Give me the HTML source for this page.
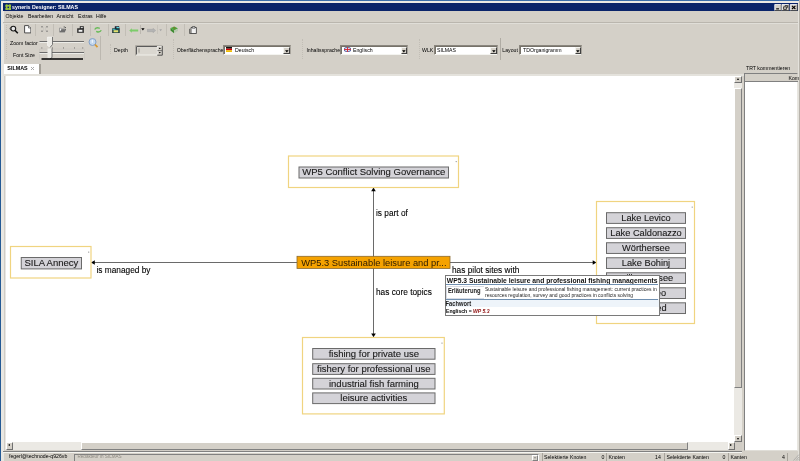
<!DOCTYPE html>
<html><head><meta charset="utf-8">
<style>
*{margin:0;padding:0;box-sizing:border-box}
html,body{width:800px;height:461px;overflow:hidden;background:#d4d0c8;font-family:"Liberation Sans",sans-serif;}
.a{position:absolute}
body{will-change:transform}
.t{position:absolute;white-space:nowrap;font-size:5.2px;color:#000;line-height:6px;transform:scaleY(1.15);transform-origin:0 50%}
.lbl{position:absolute;background:#d4d3d8;border:1px solid #6f6f6f;border-radius:1px;text-align:center;color:#222;font-size:9.3px;line-height:10px;white-space:nowrap;overflow:hidden}
.ybox{position:absolute;border:1px solid #f0d888;background:#fff}
.sep{position:absolute;width:1px;background:#a8a49c;border-right:1px solid #fff}
.grip{position:absolute;width:1px;border-left:1px dotted #c2beb6}
.combo{position:absolute;background:#fff;border:1px solid #8a867e;border-right-color:#a8a49c;border-bottom-color:#f4f4f0;box-shadow:inset 1px 1px 0 #767269}
.dd{position:absolute;right:0px;top:0.5px;bottom:0px;width:6.5px;background:#d4d0c8;border:1px solid;border-color:#f4f4f0 #404040 #404040 #f4f4f0}

</style></head><body>
<!-- window frame -->
<div class="a" style="left:0;top:0;width:800px;height:461px;background:#d4d0c8"></div>
<div class="a" style="left:0;top:0;width:1.2px;height:461px;background:#255a95"></div>
<div class="a" style="left:0;top:0;width:800px;height:1px;background:#3c6eaa"></div>
<div class="a" style="left:2px;top:1px;width:797px;height:2px;background:#ebe9e4"></div>
<div class="a" style="left:1.2px;top:1px;width:2.8px;height:460px;background:#e9e7e2"></div>
<!-- title bar -->
<div class="a" style="left:3px;top:3px;width:795px;height:8px;background:#0a246a"></div>
<svg class="a" style="left:4.5px;top:3.5px" width="6.5" height="6.5" viewBox="0 0 6.5 6.5"><g fill="#98c43a"><circle cx="1.7" cy="1.7" r="1.5"/><circle cx="4.8" cy="1.7" r="1.5"/><circle cx="1.7" cy="4.8" r="1.5"/><circle cx="4.8" cy="4.8" r="1.5"/><rect x="1" y="1" width="4.5" height="4.5"/></g><rect x="2.5" y="2.6" width="1.5" height="1.5" fill="#0a1a8a"/></svg>
<div class="t" style="left:12px;top:4px;color:#fff;font-weight:bold;font-size:5.3px;line-height:6px">syneris Designer: SILMAS</div>
<svg class="a" style="left:774px;top:3.5px" width="24" height="7" viewBox="0 0 24 7">
<rect x="0.75" y="0.5" width="6.5" height="6" fill="#d4d0c8"/><path d="M0.75 6.5 V0.5 H7.25" fill="none" stroke="#fff" stroke-width="0.8"/><path d="M0.75 6.5 H7.25 V0.5" fill="none" stroke="#404040" stroke-width="0.8"/>
<rect x="2.2" y="4.3" width="2.8" height="1.1" fill="#000"/>
<rect x="8" y="0.5" width="7" height="6" fill="#d4d0c8"/><path d="M8 6.5 V0.5 H15" fill="none" stroke="#fff" stroke-width="0.8"/><path d="M8 6.5 H15 V0.5" fill="none" stroke="#404040" stroke-width="0.8"/>
<path d="M10.8 1.6 H13.6 V3.8 M9.6 2.8 H12.4 V5.4 H9.6 Z" fill="none" stroke="#000" stroke-width="0.7"/>
<rect x="16.3" y="0.5" width="7" height="6" fill="#d4d0c8"/><path d="M16.3 6.5 V0.5 H23.3" fill="none" stroke="#fff" stroke-width="0.8"/><path d="M16.3 6.5 H23.3 V0.5" fill="none" stroke="#404040" stroke-width="0.8"/>
<path d="M18 1.8 L21.4 5 M21.4 1.8 L18 5" stroke="#000" stroke-width="1.1"/>
</svg>
<div class="a" style="left:799px;top:0;width:1px;height:461px;background:#b8b4ac"></div>
<div class="a" style="left:798px;top:3px;width:1px;height:458px;background:#e4e2dc"></div>
<!-- menu bar -->
<div class="t" style="left:5.5px;top:13px">Objekte</div>
<div class="t" style="left:28px;top:13px">Bearbeiten</div>
<div class="t" style="left:56.5px;top:13px">Ansicht</div>
<div class="t" style="left:78px;top:13px">Extras</div>
<div class="t" style="left:96px;top:13px">Hilfe</div>
<div class="a" style="left:3px;top:21.5px;width:795px;height:1.2px;background:#bab6ae"></div>
<div class="a" style="left:3px;top:22.7px;width:795px;height:1px;background:#e0ded8"></div>

<!-- toolbar row 1 -->
<div class="grip" style="left:6px;top:24.5px;height:9px"></div>
<svg class="a" style="left:9px;top:25px" width="10" height="9" viewBox="0 0 10 9"><circle cx="4.3" cy="3.6" r="2.4" fill="#e8e8e8" stroke="#1a1a1a" stroke-width="1.1"/><path d="M5.9 5.2 L8.8 8.2" stroke="#111" stroke-width="1.6"/><path d="M2.2 2.2 L0.7 3.6 L2.2 5" fill="none" stroke="#222" stroke-width="0.7"/></svg>
<svg class="a" style="left:23.5px;top:25px" width="7.5" height="8.5" viewBox="0 0 7.5 8.5"><path d="M0.6 0.6 H4.5 L6.9 3 V7.9 H0.6 Z" fill="#fff" stroke="#3a3a3a" stroke-width="0.9"/><path d="M4.5 0.6 V3 H6.9" fill="#ddd" stroke="#3a3a3a" stroke-width="0.6"/></svg>
<div class="a" style="left:35px;top:24px;width:1px;height:12px;background:#c2beb6"></div>
<svg class="a" style="left:41px;top:26px" width="7" height="6" viewBox="0 0 7 6"><g fill="#9c9a96"><rect x="0" y="0" width="2" height="1.5"/><rect x="5" y="0" width="2" height="1.5"/><rect x="0" y="4.5" width="2" height="1.5"/><rect x="5" y="4.5" width="2" height="1.5"/></g><g fill="#c0beba"><rect x="2" y="1.5" width="1" height="1"/><rect x="4" y="1.5" width="1" height="1"/><rect x="2" y="3.5" width="1" height="1"/><rect x="4" y="3.5" width="1" height="1"/></g></svg>
<div class="a" style="left:53px;top:24px;width:1px;height:12px;background:#c2beb6"></div>
<svg class="a" style="left:58.8px;top:26px" width="7.5" height="6.5" viewBox="0 0 7.5 6.5"><path d="M0.3 1.8 H2.4 L3 2.4 H5.8 V6.2 H0.3 Z" fill="#8a8a8a"/><path d="M0.6 6.2 L1.8 3.4 H7.2 L5.8 6.2 Z" fill="#6e6e6e"/><path d="M1 2.6 H2.6 L1.4 5 H1 Z" fill="#f4f4f4"/><circle cx="5.2" cy="0.9" r="0.6" fill="#555"/><circle cx="6.4" cy="1.6" r="0.6" fill="#444"/><circle cx="6.6" cy="3.4" r="0.5" fill="#555"/></svg>
<div class="a" style="left:71.5px;top:24px;width:1px;height:12px;background:#c2beb6"></div>
<svg class="a" style="left:77px;top:25.8px" width="7.2" height="7" viewBox="0 0 7.2 7"><path d="M3 0.4 H6.6 V3 H3 Z" fill="#2e2e2e" stroke="#222" stroke-width="0.5"/><path d="M3.8 1 H5.8 V2.4 H3.8 Z" fill="#d8d8d8"/><path d="M0.4 2.6 H6.8 V6.6 H0.4 Z" fill="#333" stroke="#1a1a1a" stroke-width="0.5"/><path d="M1.6 3.8 H5.4 V5.8 H1.6 Z" fill="#f2f2f2"/></svg>
<div class="a" style="left:89.5px;top:24px;width:1px;height:12px;background:#c2beb6"></div>
<svg class="a" style="left:94.3px;top:27.2px" width="8" height="5.8" viewBox="0 0 9 6.5"><path d="M0.8 2.8 Q2 0.6 4.8 0.9 L6.5 1.6" fill="none" stroke="#66bb55" stroke-width="1.5"/><path d="M8.2 3.7 Q7 5.9 4.2 5.6 L2.5 4.9" fill="none" stroke="#66bb55" stroke-width="1.5"/></svg>
<div class="a" style="left:107.5px;top:24px;width:1px;height:12px;background:#c2beb6"></div>
<svg class="a" style="left:112px;top:25.8px" width="8" height="7.4" viewBox="0 0 8 7.4"><path d="M3 0.4 H7 V3 H3 Z" fill="#223" stroke="#223" stroke-width="0.5"/><path d="M4.6 0.8 L7.4 1.2 L6.6 3 L4.2 2.6 Z" fill="#5ad8e0"/><path d="M0.4 2.6 H7.4 V7 H0.4 Z" fill="#1d4f5a" stroke="#111" stroke-width="0.5"/><path d="M0.6 2.8 H3.4 V4 H0.6 Z" fill="#3ab0b8"/><path d="M1.6 4.2 H6.2 V6.3 H1.6 Z" fill="#e4e070"/></svg>
<div class="a" style="left:124.5px;top:24px;width:1px;height:12px;background:#c2beb6"></div>
<svg class="a" style="left:129px;top:27.5px" width="9.5" height="5" viewBox="0 0 9.5 5"><path d="M0.3 2.5 L2.8 0.3 V1.5 H9.2 V3.5 H2.8 V4.7 Z" fill="#7ccc6a"/></svg>
<div class="a" style="left:139.5px;top:25px;width:1px;height:9px;background:#bcb8b0"></div>
<svg class="a" style="left:140.8px;top:28.3px" width="4" height="3"><path d="M0.2 0.2 H3.6 L1.9 2.6 Z" fill="#000"/></svg>
<svg class="a" style="left:147px;top:27.5px" width="9" height="5" viewBox="0 0 9 5"><path d="M8.7 2.5 L6 0.3 V1.3 H0.3 V3.7 H6 V4.7 Z" fill="#b4b4b4" stroke="#9c9c9c" stroke-width="0.4"/></svg>
<div class="a" style="left:157.3px;top:25px;width:1px;height:9px;background:#c8c4bc"></div>
<svg class="a" style="left:158.8px;top:28.5px" width="3.5" height="3"><path d="M0.3 0.3 H3 L1.65 2.2 Z" fill="#a4a4a4"/></svg>
<div class="a" style="left:165.5px;top:24px;width:1px;height:12px;background:#c2beb6"></div>
<svg class="a" style="left:170px;top:25.5px" width="8.5" height="8" viewBox="0 0 8.5 8"><path d="M0.5 2 L4.5 0.5 L8 2.5 L4 4.5 Z" fill="#4aa83a"/><path d="M0.5 2 V4.6 L4 7.3 V4.5 Z" fill="#3d8a30"/><path d="M4 4.5 V7.3 L8 5 V2.5 Z" fill="#b8c8b0"/><path d="M3.5 1.2 L5.2 2.6" stroke="#c03a2a" stroke-width="0.8"/></svg>
<div class="a" style="left:183.5px;top:24px;width:1px;height:12px;background:#c2beb6"></div>
<svg class="a" style="left:189px;top:25.5px" width="8" height="8" viewBox="0 0 8 8"><path d="M2 1.5 H7.4 V7.5 H2 Z" fill="#f2f2f2" stroke="#333" stroke-width="0.8"/><path d="M0.6 2.8 V7.5 H2" fill="none" stroke="#333" stroke-width="0.7"/><path d="M3.3 0.5 H6 V2.2 H3.3 Z" fill="#ddd" stroke="#333" stroke-width="0.6"/></svg>
<!-- toolbar row 2 -->
<div class="grip" style="left:6px;top:39px;height:20px"></div>
<div class="t" style="left:10px;top:40.4px">Zoom factor</div>
<div class="t" style="left:13px;top:51.5px">Font Size</div>
<svg class="a" style="left:38px;top:36px" width="64" height="26" viewBox="0 0 64 26">
<path d="M1.5 5.5 H46" stroke="#6c6c6c" stroke-width="1"/>
<path d="M1.5 6.5 H46" stroke="#f4f4f0" stroke-width="0.8"/>
<path d="M9.5 1 H14.5 V8.5 L12 11.5 L9.5 9.5 Z" fill="#ecebe6" stroke="#fff" stroke-width="0.5"/>
<path d="M14.5 1 V8.5 L12 11.5" fill="none" stroke="#555" stroke-width="0.8"/>
<g fill="#444"><rect x="3.4" y="11.6" width="0.9" height="0.9"/><rect x="14" y="11.6" width="0.9" height="0.9"/><rect x="25" y="11.6" width="0.9" height="0.9"/><rect x="36" y="11.6" width="0.9" height="0.9"/><rect x="44.3" y="11.6" width="0.9" height="0.9"/></g>
<path d="M1.5 23.5 V13 H46.5 V23.5" fill="none" stroke="#c8c6c0" stroke-width="0.7"/>
<path d="M1.5 16.5 H46" stroke="#6c6c6c" stroke-width="1"/>
<path d="M1.5 17.5 H46" stroke="#f4f4f0" stroke-width="0.8"/>
<path d="M9.5 12.5 H14 V21.5 L12 23 L9.5 22 Z" fill="#ecebe6"/>
<path d="M14 12.5 V21.5 L12 23" fill="none" stroke="#555" stroke-width="0.8"/>
<path d="M3.5 23 H45" stroke="#000" stroke-width="1.3"/>
<circle cx="54.5" cy="6" r="3.5" fill="#c4d8ee" stroke="#7b9ac4" stroke-width="0.9"/>
<path d="M54.3 4 V6.8" stroke="#fff" stroke-width="0.9"/>
<path d="M57 8.5 L59.5 11.2" stroke="#d8982c" stroke-width="1.7"/>
</svg>
<div class="a" style="left:99.5px;top:36px;width:1.5px;height:24px;background:#bcb8b0"></div>
<div class="grip" style="left:110px;top:44px;height:10px"></div>
<div class="t" style="left:114px;top:47px">Depth</div>
<svg class="a" style="left:134.5px;top:44.5px" width="28" height="11" viewBox="0 0 28 11">
<rect x="0.5" y="0.5" width="27" height="10" fill="#f0efea"/>
<path d="M0.5 10.5 V0.5 H27.5" fill="none" stroke="#a8a49c" stroke-width="0.9"/>
<path d="M1.5 9.5 V1.5 H22" fill="none" stroke="#5a5a5a" stroke-width="1"/>
<rect x="2" y="2" width="20" height="7.5" fill="#dad7d0"/>
<path d="M4 3.4 V7.6" stroke="#8c8880" stroke-width="0.8"/>
<rect x="22" y="1" width="5.5" height="9.5" fill="#d4d0c8"/>
<path d="M22.3 10 V1.3 H27" fill="none" stroke="#fafafa" stroke-width="0.6"/>
<path d="M22.3 10.2 H27.3 V1" fill="none" stroke="#404040" stroke-width="0.9"/>
<path d="M22.5 5.6 H27" stroke="#505050" stroke-width="0.7"/>
<path d="M23.8 4 L24.8 2.6 L25.8 4 Z" fill="#000"/>
<path d="M23.8 7 L24.8 8.4 L25.8 7 Z" fill="#000"/>
</svg>
<div class="grip" style="left:173px;top:39px;height:20px"></div>
<div class="t" style="left:176.7px;top:47px">Oberflächensprache</div>
<div class="combo" style="left:222.5px;top:45px;width:68px;height:9.5px"><div class="dd"><svg style="position:absolute;left:0.6px;top:2px" width="4" height="3"><path d="M0.1 0.2 H3.6 L1.85 2.4 Z" fill="#000"/></svg></div></div>
<svg class="a" style="left:226px;top:47px" width="6" height="5"><rect width="6" height="1.7" fill="#111"/><rect y="1.7" width="6" height="1.6" fill="#d40000"/><rect y="3.3" width="6" height="1.7" fill="#f0c000"/></svg>
<div class="t" style="left:235px;top:47px">Deutsch</div>
<div class="grip" style="left:302px;top:39px;height:20px"></div>
<div class="t" style="left:306.4px;top:47px">Inhaltssprache</div>
<div class="combo" style="left:340px;top:45px;width:68px;height:9.5px"><div class="dd"><svg style="position:absolute;left:0.6px;top:2px" width="4" height="3"><path d="M0.1 0.2 H3.6 L1.85 2.4 Z" fill="#000"/></svg></div></div>
<svg class="a" style="left:344px;top:47px" width="7" height="5" viewBox="0 0 7 5"><rect width="7" height="5" fill="#2a3a8a"/><path d="M0 0 L7 5 M7 0 L0 5" stroke="#fff" stroke-width="1"/><path d="M3.5 0 V5 M0 2.5 H7" stroke="#fff" stroke-width="1.6"/><path d="M3.5 0 V5 M0 2.5 H7" stroke="#d02030" stroke-width="0.9"/></svg>
<div class="t" style="left:353px;top:47px">Englisch</div>
<div class="grip" style="left:418.5px;top:39px;height:20px"></div>
<div class="t" style="left:422px;top:47px">WLK</div>
<div class="combo" style="left:433.5px;top:45px;width:64px;height:9.5px"><div class="dd"><svg style="position:absolute;left:0.6px;top:2px" width="4" height="3"><path d="M0.1 0.2 H3.6 L1.85 2.4 Z" fill="#000"/></svg></div></div>
<div class="t" style="left:437px;top:47px">SILMAS</div>
<div class="a" style="left:500px;top:38px;width:1px;height:22px;background:#b0aca4"></div>
<div class="t" style="left:502.3px;top:47px">Layout</div>
<div class="combo" style="left:519.2px;top:45px;width:63px;height:9.5px"><div class="dd"><svg style="position:absolute;left:0.6px;top:2px" width="4" height="3"><path d="M0.1 0.2 H3.6 L1.85 2.4 Z" fill="#000"/></svg></div></div>
<div class="t" style="left:523px;top:47px">TDOrganigramm</div>

<!-- tab strip -->
<div class="a" style="left:3px;top:73.5px;width:741px;height:2px;background:#e4e2dc"></div>
<div class="a" style="left:4px;top:63.5px;width:35px;height:10px;background:#fff"></div>
<div class="t" style="left:7.3px;top:65.3px;font-weight:bold;font-size:5.4px">SILMAS</div>
<svg class="a" style="left:29.5px;top:65.5px" width="5" height="5"><path d="M1 1 L4 4 M4 1 L1 4" stroke="#a0a0a0" stroke-width="0.9"/></svg>
<div class="a" style="left:39px;top:63.5px;width:1.8px;height:10px;background:#a4a098"></div>
<div class="t" style="left:746px;top:64.6px">TRT kommentieren</div>
<!-- canvas -->
<div class="a" style="left:4px;top:75.5px;width:738px;height:376px;background:#d0ccc5"></div><div class="a" style="left:5px;top:75.5px;width:1px;height:366.5px;background:#e8e6e3"></div>
<div class="a" style="left:6px;top:75.5px;width:728px;height:366.5px;background:#fff"></div>
<!-- vertical scrollbar -->
<div class="a" style="left:734px;top:75.5px;width:7.8px;height:366.5px;background:#ebe9e4"></div>
<div class="a" style="left:734px;top:75.5px;width:7.5px;height:7px;background:#d4d0c8;border:1px solid;border-color:#fff #707070 #707070 #fff"></div>
<div class="a" style="left:736.5px;top:78px;border-left:1.5px solid transparent;border-right:1.5px solid transparent;border-bottom:2px solid #000"></div>
<div class="a" style="left:734px;top:88px;width:7.5px;height:299.5px;background:#d4d0c8;border:1px solid;border-color:#fff #808080 #808080 #fff"></div>
<div class="a" style="left:734px;top:435px;width:7.5px;height:7px;background:#d4d0c8;border:1px solid;border-color:#fff #707070 #707070 #fff"></div>
<div class="a" style="left:736.5px;top:438px;border-left:1.5px solid transparent;border-right:1.5px solid transparent;border-top:2px solid #000"></div>
<!-- horizontal scrollbar -->
<div class="a" style="left:5px;top:442px;width:729px;height:7.5px;background:#ebe9e4"></div>
<div class="a" style="left:5.5px;top:442px;width:7px;height:7.5px;background:#d4d0c8;border:1px solid;border-color:#fff #707070 #707070 #fff"></div>
<div class="a" style="left:8px;top:444px;border-top:1.5px solid transparent;border-bottom:1.5px solid transparent;border-right:2px solid #000"></div>
<div class="a" style="left:81px;top:442px;width:607px;height:7.5px;background:#d4d0c8;border:1px solid;border-color:#fff #808080 #808080 #fff"></div>
<div class="a" style="left:727.5px;top:442px;width:7px;height:7.5px;background:#d4d0c8;border:1px solid;border-color:#fff #707070 #707070 #fff"></div>
<div class="a" style="left:730px;top:444px;border-top:1.5px solid transparent;border-bottom:1.5px solid transparent;border-left:2px solid #000"></div>
<!-- right panel -->
<div class="a" style="left:744px;top:73px;width:54px;height:377.5px;background:#fff;border:1px solid;border-color:#808080 #e8e6e0 #e0ded8 #808080"></div>
<div class="a" style="left:745px;top:74px;width:53px;height:7.5px;background:#d4d0c8;border-bottom:1px solid #808080"></div>
<div class="t" style="left:788.5px;top:75.3px">Kom</div>
<!-- status bar -->
<div class="a" style="left:3px;top:450.5px;width:739px;height:1px;background:#808080"></div>
<div class="a" style="left:3px;top:451.5px;width:739px;height:1px;background:#f4f4f0"></div>
<div class="t" style="left:9px;top:453px">fegerl@technode-q926vb</div>
<div class="a" style="left:74px;top:453.5px;width:465px;height:8px;background:#d4d0c8;border:1px solid;border-color:#808080 #fff #fff #808080"></div>
<div class="t" style="left:77.5px;top:454.2px;color:#8e8a82;font-size:4.6px">Redakteur in SILMAS</div>
<div class="a" style="left:532px;top:454.5px;width:6px;height:6.5px;background:#d4d0c8;border:1px solid;border-color:#fff #808080 #808080 #fff"></div>
<div class="a" style="left:533.5px;top:457px;border-left:1.5px solid transparent;border-right:1.5px solid transparent;border-top:2px solid #888"></div>
<div class="a" style="left:542px;top:453px;width:1px;height:8px;background:#a8a49c"></div>
<div class="t" style="left:544px;top:453.8px">Selektierte Knoten</div>
<div class="t" style="left:601.5px;top:453.8px">0</div>
<div class="a" style="left:605.5px;top:453px;width:1px;height:8px;background:#a8a49c"></div>
<div class="t" style="left:608.5px;top:453.8px">Knoten</div>
<div class="t" style="left:655px;top:453.8px">14</div>
<div class="a" style="left:663.5px;top:453px;width:1px;height:8px;background:#a8a49c"></div>
<div class="t" style="left:666.5px;top:453.8px">Selektierte Kanten</div>
<div class="t" style="left:722.5px;top:453.8px">0</div>
<div class="a" style="left:727.5px;top:453px;width:1px;height:8px;background:#a8a49c"></div>
<div class="t" style="left:730.5px;top:453.8px">Kanten</div>
<div class="t" style="left:782px;top:453.8px">4</div>
<div class="a" style="left:787px;top:453px;width:1px;height:8px;background:#a8a49c"></div>
<svg class="a" style="left:791px;top:453px" width="9" height="8"><path d="M8 1.5 L2.5 7.5 M8 4 L5 7.5 M8 6.2 L7 7.5" stroke="#a0a0a0" stroke-width="0.7"/></svg>
<svg class="a" style="left:0;top:0" width="800" height="461" font-family="Liberation Sans, sans-serif"><path d="M373.5 190 V334.5" stroke="#6a6a6a" stroke-width="1"/><path d="M94 262.5 H593" stroke="#6a6a6a" stroke-width="1"/><path d="M373.5 187.5 L371.2 191.3 H375.8 Z" fill="#000"/><path d="M373.5 337.2 L371.2 333.4 H375.8 Z" fill="#000"/><path d="M91 262.5 L94.8 260.2 V264.8 Z" fill="#000"/><path d="M596.5 262.5 L592.7 260.2 V264.8 Z" fill="#000"/><rect x="288.5" y="156" width="170.0" height="31.5" fill="#fff" stroke="#f0d480" stroke-width="1.2"/><circle cx="456.20" cy="161.60" r="0.65" fill="#8c8c8c"/><rect x="299.00" y="167.00" width="149.50" height="11.00" fill="#d4d3d8" stroke="#6a6a6a" stroke-width="1"/><text x="373.75" y="175.4" text-anchor="middle" font-size="9.5" fill="#1a1a1a" stroke="#1a1a1a" stroke-width="0.12">WP5 Conflict Solving Governance</text><rect x="10.5" y="246.5" width="80.5" height="31.5" fill="#fff" stroke="#f0d480" stroke-width="1.2"/><circle cx="88.70" cy="252.10" r="0.65" fill="#8c8c8c"/><rect x="21.25" y="257.50" width="60.25" height="11.40" fill="#d4d3d8" stroke="#6a6a6a" stroke-width="1"/><text x="51.375" y="265.9" text-anchor="middle" font-size="9.5" fill="#1a1a1a" stroke="#1a1a1a" stroke-width="0.12">SILA Annecy</text><rect x="596.5" y="201.5" width="98.0" height="122" fill="#fff" stroke="#f0d480" stroke-width="1.2"/><circle cx="692.20" cy="207.10" r="0.65" fill="#8c8c8c"/><rect x="606.50" y="212.70" width="79.00" height="10.70" fill="#d4d3d8" stroke="#6a6a6a" stroke-width="1"/><text x="646.0" y="221.1" text-anchor="middle" font-size="9.25" fill="#1a1a1a" stroke="#1a1a1a" stroke-width="0.12">Lake Levico</text><rect x="606.50" y="227.72" width="79.00" height="10.70" fill="#d4d3d8" stroke="#6a6a6a" stroke-width="1"/><text x="646.0" y="236.12" text-anchor="middle" font-size="9.25" fill="#1a1a1a" stroke="#1a1a1a" stroke-width="0.12">Lake Caldonazzo</text><rect x="606.50" y="242.74" width="79.00" height="10.70" fill="#d4d3d8" stroke="#6a6a6a" stroke-width="1"/><text x="646.0" y="251.14000000000001" text-anchor="middle" font-size="9.25" fill="#1a1a1a" stroke="#1a1a1a" stroke-width="0.12">Wörthersee</text><rect x="606.50" y="257.76" width="79.00" height="10.70" fill="#d4d3d8" stroke="#6a6a6a" stroke-width="1"/><text x="646.0" y="266.15999999999997" text-anchor="middle" font-size="9.25" fill="#1a1a1a" stroke="#1a1a1a" stroke-width="0.12">Lake Bohinj</text><rect x="606.50" y="272.78" width="79.00" height="10.70" fill="#d4d3d8" stroke="#6a6a6a" stroke-width="1"/><text x="646.0" y="281.17999999999995" text-anchor="middle" font-size="9.25" fill="#1a1a1a" stroke="#1a1a1a" stroke-width="0.12">Millstättersee</text><rect x="606.50" y="287.80" width="79.00" height="10.70" fill="#d4d3d8" stroke="#6a6a6a" stroke-width="1"/><text x="646.0" y="296.2" text-anchor="middle" font-size="9.25" fill="#1a1a1a" stroke="#1a1a1a" stroke-width="0.12">Lake Iseo</text><rect x="606.50" y="302.82" width="79.00" height="10.70" fill="#d4d3d8" stroke="#6a6a6a" stroke-width="1"/><text x="646.0" y="311.21999999999997" text-anchor="middle" font-size="9.25" fill="#1a1a1a" stroke="#1a1a1a" stroke-width="0.12">Lake Bled</text><rect x="302.5" y="337.5" width="141.8" height="76.39999999999998" fill="#fff" stroke="#f0d480" stroke-width="1.2"/><circle cx="442.00" cy="343.10" r="0.65" fill="#8c8c8c"/><rect x="312.70" y="348.50" width="122.30" height="10.70" fill="#d4d3d8" stroke="#6a6a6a" stroke-width="1"/><text x="373.85" y="356.9" text-anchor="middle" font-size="9.5" fill="#1a1a1a" stroke="#1a1a1a" stroke-width="0.12">fishing for private use</text><rect x="312.70" y="363.70" width="122.30" height="10.70" fill="#d4d3d8" stroke="#6a6a6a" stroke-width="1"/><text x="373.85" y="372.09999999999997" text-anchor="middle" font-size="9.5" fill="#1a1a1a" stroke="#1a1a1a" stroke-width="0.12">fishery for professional use</text><rect x="312.70" y="378.30" width="122.30" height="10.70" fill="#d4d3d8" stroke="#6a6a6a" stroke-width="1"/><text x="373.85" y="386.7" text-anchor="middle" font-size="9.5" fill="#1a1a1a" stroke="#1a1a1a" stroke-width="0.12">industrial fish farming</text><rect x="312.70" y="392.90" width="122.30" height="10.70" fill="#d4d3d8" stroke="#6a6a6a" stroke-width="1"/><text x="373.85" y="401.29999999999995" text-anchor="middle" font-size="9.5" fill="#1a1a1a" stroke="#1a1a1a" stroke-width="0.12">leisure activities</text><rect x="297" y="256.3" width="153" height="12.2" fill="#f5a200" stroke="#8a6a30" stroke-width="0.8"/><text x="301.3" y="265.6" font-size="9.3" fill="#2a1a00">WP5.3 Sustainable leisure and pr...</text><text x="376" y="216" font-size="8.3" fill="#000" stroke="#000" stroke-width="0.1">is part of</text><text x="96.5" y="273" font-size="8.3" fill="#000" stroke="#000" stroke-width="0.1">is managed by</text><text x="376" y="294.8" font-size="8.3" fill="#000" stroke="#000" stroke-width="0.1">has core topics</text><text x="452" y="272.6" font-size="8.3" fill="#000" stroke="#000" stroke-width="0.1">has pilot sites with</text></svg>
<div class="a" style="left:444.5px;top:275.2px;width:215px;height:40.6px;background:#fff;border:1px solid #7a7a7a;"></div>
<div class="t" style="left:446.8px;top:277px;font-weight:bold;font-size:6.75px;line-height:7px;color:#111">WP5.3 Sustainable leisure and professional fishing managements</div>
<div class="a" style="left:445.5px;top:284.2px;width:212px;height:1px;background:#6f8fb0"></div>
<div class="a" style="left:445.5px;top:285.5px;width:38px;height:13.5px;border:1px solid #d8dce4;border-right:none"></div>
<div class="t" style="left:447.9px;top:287.7px;font-weight:bold;font-size:5.85px;color:#222">Erläuterung</div>
<div class="t" style="left:485px;top:286.4px;font-size:5px;color:#1e1e1e">Sustainable leisure and professional fishing management: current practices in</div>
<div class="t" style="left:485px;top:292.2px;font-size:5px;color:#1e1e1e">resources regulation, survey and good practices in conflicts solving</div>
<div class="a" style="left:445.5px;top:299.1px;width:213px;height:8px;background:#eef4fa"></div>
<div class="a" style="left:445.5px;top:299px;width:212px;height:1px;background:#6f8fb0"></div>
<div class="t" style="left:445.6px;top:301px;font-size:5.75px;font-weight:bold;color:#1a1a1a">Fachwort</div>
<div class="t" style="left:446px;top:308.3px;font-size:5.1px;font-weight:bold;color:#000">Englisch = <span style="color:#8c0c0c;font-style:italic">WP 5.3</span></div>
</body></html>
